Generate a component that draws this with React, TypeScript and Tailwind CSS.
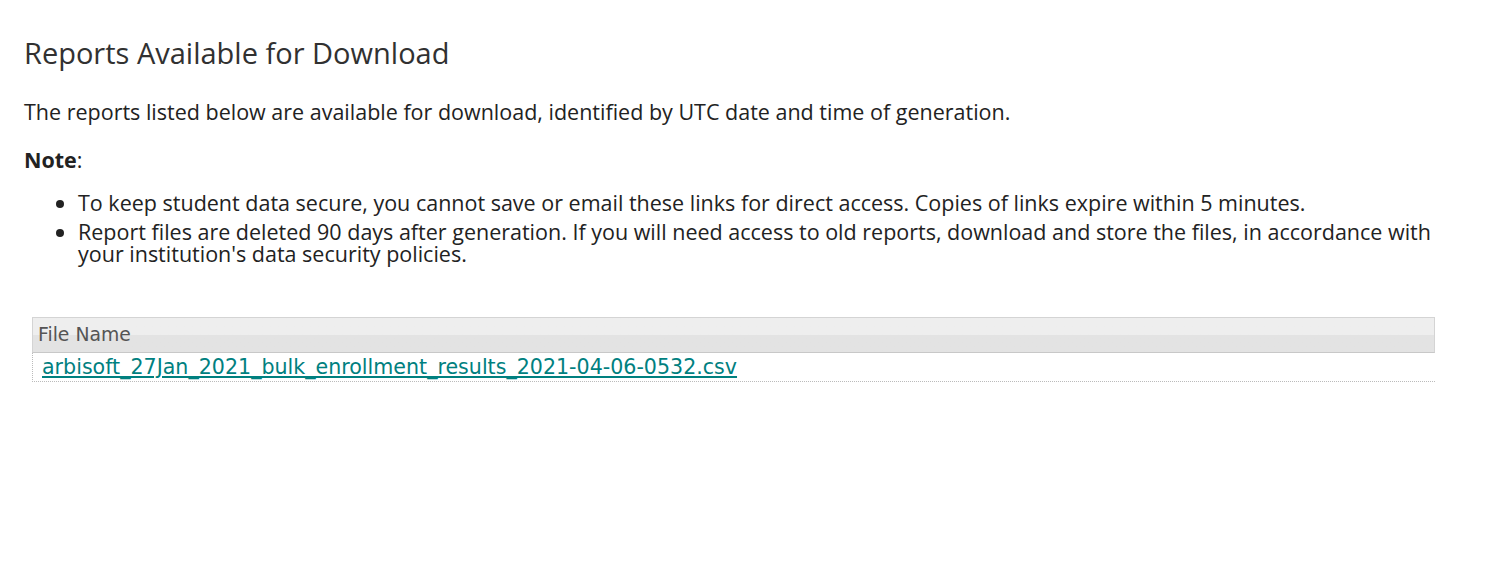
import React from 'react';

const App: React.FC = () => {
  return (
    <div className="min-h-screen bg-white px-6 pt-[34px] font-['Open_Sans',sans-serif] text-[#222]">
      <h2 className="text-[29px] leading-[38px] font-normal text-[#313131]">Reports Available for Download</h2>
      <p className="mt-[26px] text-[21.5px] leading-[28px]">
        The reports listed below are available for download, identified by UTC date and time of generation.
      </p>
      <p className="mt-[20px] text-[21.5px] leading-[28px]">
        <span className="font-bold">Note</span>:
      </p>
      <ul className="mt-[18px] list-disc pl-[54px] text-[21.5px] leading-[22px]">
        <li className="mb-[7px]">
          To keep student data secure, you cannot save or email these links for direct access. Copies of links expire within 5 minutes.
        </li>
        <li className="pr-[50px]">
          Report files are deleted 90 days after generation. If you will need access to old reports, download and store the files, in accordance with your institution's data security policies.
        </li>
      </ul>
      <div className="ml-2 mt-[52px] w-[1403px] font-['DejaVu_Sans',sans-serif]">
        <div className="flex h-[36px] items-center border border-[#d4d4d4] border-b-[#c8c8c8] border-b-dotted bg-gradient-to-b from-[#eeeeee] from-50% to-[#e3e3e3] to-50% px-[5px] text-[18.8px] text-[#555]">
          File Name
        </div>
        <div className="flex h-[29px] items-center border-b border-l border-dotted border-[#bbb] px-[9px] text-[20.6px] leading-[24px]">
          <a href="#" className="text-[#00807f] underline">
            arbisoft_27Jan_2021_bulk_enrollment_results_2021-04-06-0532.csv
          </a>
        </div>
      </div>
    </div>
  );
};

export default App;
